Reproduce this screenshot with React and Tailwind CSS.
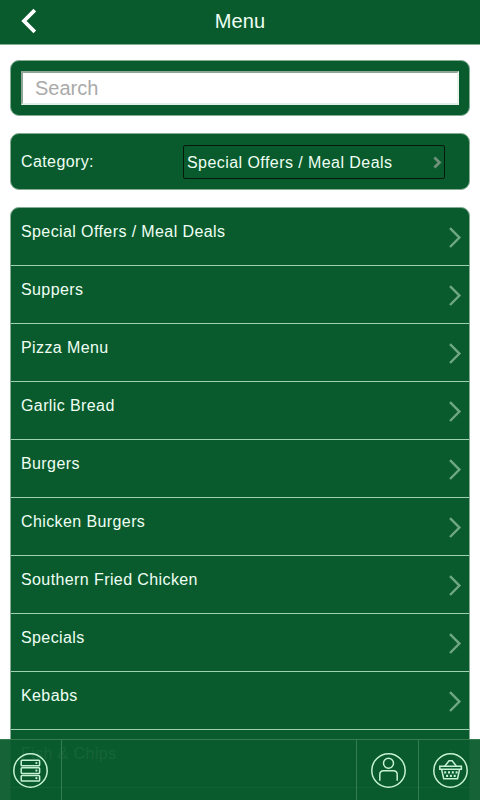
import { useState } from 'react';

const CATEGORIES = [
  'Special Offers / Meal Deals',
  'Suppers',
  'Pizza Menu',
  'Garlic Bread',
  'Burgers',
  'Chicken Burgers',
  'Southern Fried Chicken',
  'Specials',
  'Kebabs',
  'Fish & Chips',
];

function RoundIcon({ children }) {
  return (
    <svg width="35" height="35" viewBox="0 0 35 35" fill="none" stroke="#c6f2d4" strokeWidth="1.5">
      <circle cx="17.5" cy="17.5" r="16.7" />
      {children}
    </svg>
  );
}

function OrdersIcon() {
  return (
    <RoundIcon>
      {[7.2, 14.8, 22.4].map((y) => (
        <g key={y}>
          <rect x="8.2" y={y} width="18.4" height="5.6" rx="0.8" />
          <circle cx="23.4" cy={y + 2.8} r="1.1" fill="#c6f2d4" stroke="none" />
        </g>
      ))}
    </RoundIcon>
  );
}

function AccountIcon() {
  return (
    <RoundIcon>
      <circle cx="17.5" cy="10.3" r="5" />
      <path d="M8.8 27.8v-6.1q0-3.9 3.9-3.9h9.6q3.9 0 3.9 3.9v6.1" />
    </RoundIcon>
  );
}

function BasketIcon() {
  return (
    <RoundIcon>
      <path d="M6.8 13.3h21.6v3H6.8z" />
      <path d="M8.6 16.3l2.1 9.4h13.8l2.1-9.4" />
      <path d="M11.6 13.5l4.4-5.7h3.2l4.4 5.7" />
      <path d="M11.2 19.3h13.4" strokeWidth="2.2" strokeDasharray="2 1.8" />
      <path d="M13.1 22.8h9.6" strokeWidth="2.2" strokeDasharray="2 1.8" />
    </RoundIcon>
  );
}

function Header() {
  return (
    <header className="relative flex h-[45px] shrink-0 justify-center border-b border-[#84ad94] bg-[#095b2d] pt-[9px]">
      <button type="button" aria-label="Back" className="absolute top-[8px] left-[20px]">
        <svg width="18" height="26" viewBox="0 0 18 26" fill="none" stroke="#fff" strokeWidth="3.8">
          <path d="M14.8 2.2L4 13l10.8 10.8" />
        </svg>
      </button>
      <h1 className="text-[20px] leading-[24px] tracking-[0.1px]">Menu</h1>
    </header>
  );
}

function Card({ className, children }) {
  return (
    <section className={`mx-[10px] shrink-0 rounded-[9px] border border-[#84ad94] bg-[#095b2d] ${className}`}>
      {children}
    </section>
  );
}

function Footer() {
  return (
    <footer className="absolute inset-x-0 bottom-0 flex h-[61px] border-t border-[#347d50] bg-[#095b2d]/95">
      <button type="button" aria-label="Orders" className="flex w-[62px] items-start border-r border-[#347d50] pt-[13px] pl-[13px]">
        <OrdersIcon />
      </button>
      <button type="button" aria-label="Account" className="ml-auto flex w-[63px] items-start border-x border-[#347d50] pt-[13px] pl-[14px]">
        <AccountIcon />
      </button>
      <button type="button" aria-label="Basket" className="flex w-[61px] items-start pt-[13px] pl-[14px]">
        <BasketIcon />
      </button>
    </footer>
  );
}

export default function App() {
  const [search, setSearch] = useState('');

  return (
    <div className="relative flex h-screen flex-col overflow-hidden bg-white font-['Liberation_Sans',Arial,sans-serif] text-[16px] leading-[20px] tracking-[0.4px] text-[#effff4]">
      <Header />

      <Card className="mt-[15px] h-[56px] p-[10px]">
        <input
          value={search}
          onChange={(e) => setSearch(e.target.value)}
          placeholder="Search"
          className="block h-[34px] w-full border-2 border-t-[#8fa598] border-r-[#e9f4ec] border-b-[#e0efe5] border-l-[#8fa598] bg-white px-[12px] text-[20px] tracking-[0px] text-black outline-none placeholder:text-[#aaa]"
        />
      </Card>

      <Card className="mt-[17px] flex h-[57px] items-center pr-[24px] pl-[10px]">
        <span>Category:</span>
        <button
          type="button"
          className="mt-[1px] ml-auto flex h-[34px] w-[262px] items-center justify-between rounded-[2px] border border-[#06170c] pr-[2px] pl-[3px] tracking-[0.44px]"
        >
          <span className="pt-[2px]">Special Offers / Meal Deals</span>
          <svg width="9" height="13" viewBox="0 0 9 13" fill="none" stroke="#6d9279" strokeWidth="2.8">
            <path d="M1.4 1.4L6.5 6.5l-5.1 5.1" />
          </svg>
        </button>
      </Card>

      {/* the list runs on below the footer bar */}
      <Card className="mt-[17px] overflow-hidden pb-[58px]">
        <ul>
          {CATEGORIES.map((name) => (
            <li key={name} className="flex h-[58px] justify-between border-b border-[#9fd0b0] pt-[14px] pr-[7px] pl-[10px]">
              {name}
              <svg className="mt-[5px]" width="14" height="22" viewBox="0 0 14 22" fill="none" stroke="#6fa784" strokeWidth="2.4">
                <path d="M2 1.2l9.4 9.4L2 20" />
              </svg>
            </li>
          ))}
        </ul>
      </Card>

      <Footer />
    </div>
  );
}
